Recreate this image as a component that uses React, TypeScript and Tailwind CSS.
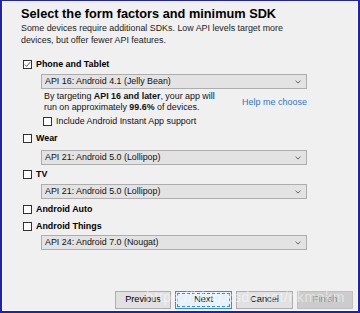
import React from "react";

const font = { fontFamily: '"Liberation Sans", Arial, sans-serif' };

function Box({ checked }: { checked?: boolean }) {
  return (
    <span className="w-[9px] h-[9px] border border-[#333] bg-white flex items-center justify-center shrink-0">
      {checked && (
        <svg width="7" height="7" viewBox="0 0 7 7">
          <path d="M0.8 3.6 L2.6 5.4 L6.2 1.2" fill="none" stroke="#444" strokeWidth="0.9" />
        </svg>
      )}
    </span>
  );
}

function Select({ label }: { label: string }) {
  return (
    <div className="ml-[38px] w-[266px] h-[15px] bg-[#e3e3e3] border border-[#adadad] flex items-center justify-between pl-[3px] pr-[5px]">
      <span className="text-[8.9px] leading-none text-[#111]">{label}</span>
      <svg width="6" height="4" viewBox="0 0 6 4">
        <path d="M0.5 0.6 L3 3.1 L5.5 0.6" fill="none" stroke="#555" strokeWidth="0.9" />
      </svg>
    </div>
  );
}

function Check({ label, checked }: { label: string; checked?: boolean }) {
  return (
    <div className="flex items-center gap-[4px] ml-[20px] h-[9px]">
      <Box checked={checked} />
      <span className="text-[8.9px] font-bold text-black leading-none">{label}</span>
    </div>
  );
}

export default function App() {
  return (
    <div
      className="w-[360px] h-[313px] bg-[#1f22b0] pt-[1px] pl-[2px] pr-[2px] pb-[2px] relative"
      style={font}
    >
      <div className="w-full h-full bg-[#f0f0f0] border border-[#fbfbfb] flex flex-col">
        <div className="pl-[18px] pt-[4px]">
          <div className="text-[12.75px] font-bold text-black leading-[16px]">
            Select the form factors and minimum SDK
          </div>
          <div className="text-[8.9px] text-[#222] leading-[12px]">
            Some devices require additional SDKs. Low API levels target more
            <br />
            devices, but offer fewer API features.
          </div>
        </div>
        <div className="mt-[14px]">
          <Check label="Phone and Tablet" checked />
          <div className="mt-[5px]">
            <Select label="API 16: Android 4.1 (Jelly Bean)" />
          </div>
          <div className="flex ml-[41px] mt-[2px] w-[263px] justify-between items-center">
            <div className="text-[8.9px] leading-[11px] text-[#111]">
              By targeting <b>API 16 and later</b>, your app will
              <br />
              run on approximately <b>99.6%</b> of devices.
            </div>
            <span className="text-[9px] text-[#2f78c8] leading-none">Help me choose</span>
          </div>
          <div className="flex items-center gap-[4px] ml-[40px] mt-[4px] h-[9px]">
            <Box />
            <span className="text-[8.9px] leading-none text-[#111]">Include Android Instant App support</span>
          </div>
          <div className="mt-[8px]">
            <Check label="Wear" />
          </div>
          <div className="mt-[7px]">
            <Select label="API 21: Android 5.0 (Lollipop)" />
          </div>
          <div className="mt-[5px]">
            <Check label="TV" />
          </div>
          <div className="mt-[5px]">
            <Select label="API 21: Android 5.0 (Lollipop)" />
          </div>
          <div className="mt-[6px]">
            <Check label="Android Auto" />
          </div>
          <div className="mt-[8px]">
            <Check label="Android Things" />
          </div>
          <div className="mt-[4px]">
            <Select label="API 24: Android 7.0 (Nougat)" />
          </div>
        </div>
        <div className="mt-auto mb-[1px] flex justify-end gap-[4px] pr-[4px]">
          <button className="w-[56px] h-[18px] bg-[#e1e1e1] border border-[#adadad] text-[9.2px] text-black leading-none">
            Previous
          </button>
          <button className="w-[57px] h-[18px] bg-[#e5f1fb] border border-[#3c8ad9] text-[9.2px] text-black leading-none outline-1 outline-dashed outline-[#3c8ad9] -outline-offset-[3px]">
            Next
          </button>
          <button className="w-[57px] h-[18px] bg-[#e1e1e1] border border-[#adadad] text-[9.2px] text-black leading-none">
            Cancel
          </button>
          <button className="w-[56px] h-[18px] bg-[#cccccc] border border-[#bfbfbf] text-[9.2px] text-[#838383] leading-none">
            Finish
          </button>
        </div>
      </div>
      <div className="absolute left-[146px] top-[290px] text-[14px] text-white/50 tracking-[0.6px] pointer-events-none leading-none">
        https://blog.csdn.net/nkmnkm
      </div>
    </div>
  );
}
